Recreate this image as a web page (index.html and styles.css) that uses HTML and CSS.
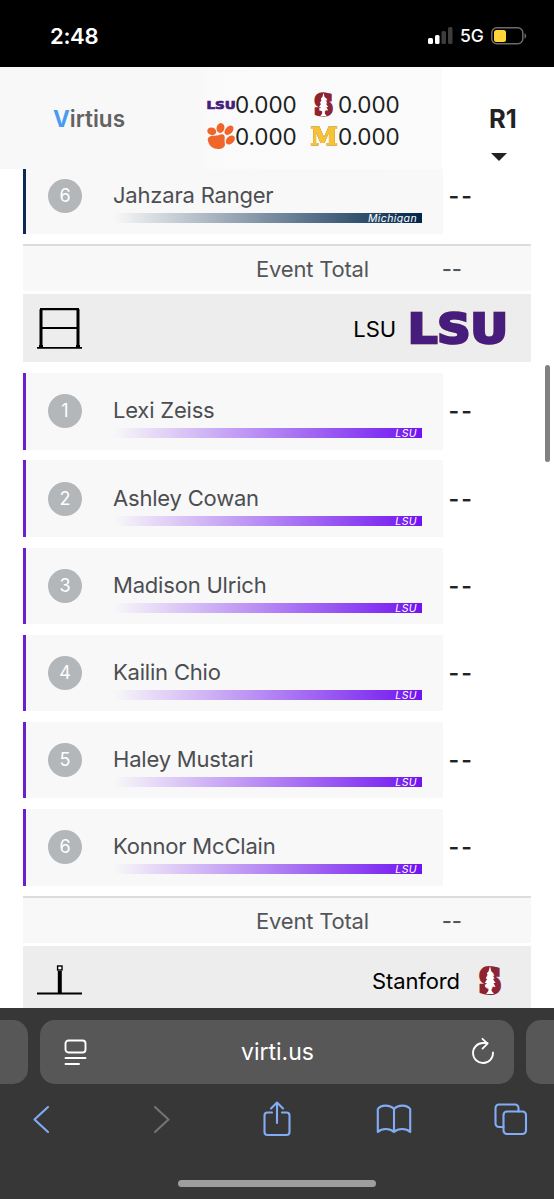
FILE: index.html
```html
<!DOCTYPE html>
<html lang="en">
  <head>
    <meta charset="UTF-8" />
    <meta name="viewport" content="width=device-width, initial-scale=1" />
    <title>Virtius</title>
    <link rel="stylesheet" href="styles.css">
  </head>
  <body>
    <div class="status-bar">
      <span class="time">2:48</span>
      <div class="status-icons">
        <svg width="25" height="17" viewBox="0 0 25 17">
          <rect x="0" y="11" width="5" height="6" rx="1.500" fill="#fff" />
          <rect x="7" y="8" width="4.500" height="9" rx="1.500" fill="#fff" />
          <rect x="13.500" y="4" width="4.500" height="13" rx="1.500" fill="#3d3d3d" />
          <rect x="20" y="0" width="4.500" height="17" rx="1.500" fill="#3d3d3d" />
        </svg>
        <span class="network">5G</span>
        <svg width="36" height="18" viewBox="0 0 36 18">
          <rect x=".8" y=".8" width="31" height="16" rx="5" fill="none" stroke="#6b6b6b" stroke-width="1.500" />
          <rect x="3" y="3" width="12" height="12" rx="2.500" fill="#ffd63a" />
          <path d="M33.500 6.200c2.200.8 2.200 4.600 0 5.400z" fill="#6b6b6b" />
        </svg>
      </div>
    </div>

    <header class="site-header">
      <div class="brand"><b>V</b>irtius</div>
      <div class="scores">
        <div class="team">
          <span class="logo"><svg width="28" height="9" viewBox="0 0 96 32" preserveAspectRatio="none">
            <text class="lsu" x="-2" y="30.500" textLength="100" lengthAdjust="spacingAndGlyphs">LSU</text>
          </svg></span>0.000
        </div>
        <div class="team">
          <span class="logo"><svg width="19" height="27" viewBox="0 0 22 32">
            <text class="block-s" x="0" y="28.500" textLength="22" lengthAdjust="spacingAndGlyphs">S</text>
            <path class="tree" d="M11 2l1.200 5 2 3-1 .5 2.300 4-1.500.5 2.500 4-2 0 2 4-4.200-.5.4 4.500 2.300 3H7l2.300-3 .4-4.500-4 .5 2-4-2 0 2.500-4-1.500-.5 2-4-1-.5 2-3z" />
          </svg></span>0.000
        </div>
        <div class="team">
          <span class="logo"><svg width="28" height="27" viewBox="0 0 28 27" fill="#f0652b">
            <path d="M1.500 14.500C5 11.500 8 13.500 12 12c3-1 4.500-1 5.500 1 .8 2.500-.5 4 .3 7 1 4-2.500 6-6.800 6-5 0-8.500-3-9.500-6.500-.6-2-1.500-3.500 0-5z" />
            <ellipse cx="4.800" cy="8.300" rx="4.600" ry="3.700" transform="rotate(20 4.800 8.300)" />
            <ellipse cx="13.500" cy="5" rx="3.900" ry="5" transform="rotate(14 13.500 5)" />
            <ellipse cx="22" cy="7.300" rx="3.600" ry="5.400" transform="rotate(42 22 7.300)" />
            <ellipse cx="23.300" cy="17" rx="3.600" ry="5.300" transform="rotate(48 23.300 17)" />
          </svg></span>0.000
        </div>
        <div class="team">
          <span class="logo"><svg width="28" height="21" viewBox="0 0 28 21">
            <text class="block-m outline" x=".5" y="19" textLength="27" lengthAdjust="spacingAndGlyphs">M</text>
          </svg></span>0.000
        </div>
      </div>
      <div class="rotation">
        <span>R1</span>
        <svg width="16" height="8" viewBox="0 0 16 8"><path d="M0 0h16L8 8z" fill="#222" /></svg>
      </div>
    </header>

    <main class="page">
      <div class="meet">
        <div class="row michigan">
          <div class="card">
            <span class="order">6</span>
            <div class="gymnast"><span class="name">Jahzara Ranger</span><div class="bar">Michigan</div></div>
          </div>
          <span class="score">--</span>
        </div>
        <div class="total"><span>Event Total</span><span class="total-score">--</span></div>

        <div class="event">
          <svg width="46" height="42" viewBox="0 0 46 42" fill="none" stroke="#000">
            <path d="M4 41V2.200M41 41V2.200" stroke-width="3" />
            <path d="M3 2.200h39M4 21h38" stroke-width="2.200" />
            <path d="M0 40.800h45" stroke-width="1.800" />
            <path d="M2 39.500h4M39 39.500h4" stroke-width="3" />
          </svg>
          <span class="event-team">LSU</span>
          <svg class="event-logo" width="96" height="32" viewBox="0 0 96 32">
            <text class="lsu" x="-2" y="30.500" textLength="100" lengthAdjust="spacingAndGlyphs">LSU</text>
          </svg>
        </div>
        <div class="row">
          <div class="card">
            <span class="order">1</span>
            <div class="gymnast"><span class="name">Lexi Zeiss</span><div class="bar">LSU</div></div>
          </div>
          <span class="score">--</span>
        </div>
        <div class="row">
          <div class="card">
            <span class="order">2</span>
            <div class="gymnast"><span class="name">Ashley Cowan</span><div class="bar">LSU</div></div>
          </div>
          <span class="score">--</span>
        </div>
        <div class="row">
          <div class="card">
            <span class="order">3</span>
            <div class="gymnast"><span class="name">Madison Ulrich</span><div class="bar">LSU</div></div>
          </div>
          <span class="score">--</span>
        </div>
        <div class="row">
          <div class="card">
            <span class="order">4</span>
            <div class="gymnast"><span class="name">Kailin Chio</span><div class="bar">LSU</div></div>
          </div>
          <span class="score">--</span>
        </div>
        <div class="row">
          <div class="card">
            <span class="order">5</span>
            <div class="gymnast"><span class="name">Haley Mustari</span><div class="bar">LSU</div></div>
          </div>
          <span class="score">--</span>
        </div>
        <div class="row">
          <div class="card">
            <span class="order">6</span>
            <div class="gymnast"><span class="name">Konnor McClain</span><div class="bar">LSU</div></div>
          </div>
          <span class="score">--</span>
        </div>
        <div class="total"><span>Event Total</span><span class="total-score">--</span></div>

        <div class="event">
          <svg width="46" height="42" viewBox="0 0 46 42" fill="none" stroke="#000">
            <path d="M0 34.500h45" stroke-width="2" />
            <path d="M22.800 12v22" stroke-width="4" />
            <rect x="20.600" y="7" width="4.400" height="4" fill="#fff" stroke-width="1.400" />
          </svg>
          <span class="event-team">Stanford</span>
          <svg class="event-logo small" width="22" height="32" viewBox="0 0 22 32">
            <text class="block-s" x="0" y="28.500" textLength="22" lengthAdjust="spacingAndGlyphs">S</text>
            <path class="tree" d="M11 2l1.200 5 2 3-1 .5 2.300 4-1.500.5 2.500 4-2 0 2 4-4.200-.5.4 4.500 2.300 3H7l2.300-3 .4-4.500-4 .5 2-4-2 0 2.500-4-1.500-.5 2-4-1-.5 2-3z" />
          </svg>
        </div>
      </div>
      <div class="scroll-thumb"></div>
    </main>

    <footer class="browser">
      <div class="tabs">
        <div class="tab side"></div>
        <div class="tab address">
          <svg width="24" height="27" viewBox="0 0 24 27" fill="none" stroke="#fff" stroke-width="1.900" stroke-linecap="round">
            <rect x="1.500" y="1.500" width="20" height="12" rx="3" />
            <path d="M1.500 19h20M1.500 25h13.500" />
          </svg>
          <span class="url">virti.us</span>
          <svg width="24" height="28" viewBox="0 0 24 28" fill="none" stroke="#fff" stroke-width="1.800" stroke-linecap="round" stroke-linejoin="round">
            <path d="M22 14.500A10 10 0 1 1 12 5h4.500" />
            <path d="M11.500.800l5 4.800-5 5" />
          </svg>
        </div>
        <div class="tab side"></div>
      </div>
      <nav class="toolbar">
        <svg width="34" height="36" viewBox="0 0 34 36"><path d="M24 6L10.500 18.500 24 31" /></svg>
        <svg class="disabled" width="34" height="36" viewBox="0 0 34 36"><path d="M13 6L26.500 18.500 13 31" /></svg>
        <svg width="34" height="36" viewBox="0 0 34 36">
          <path d="M13 11.500H8.500a3 3 0 0 0-3 3V31a3 3 0 0 0 3 3h19a3 3 0 0 0 3-3V14.500a3 3 0 0 0-3-3H23M18 22V2M12 7.500L18 1.500l6 6" />
        </svg>
        <svg width="34" height="36" viewBox="0 0 34 36">
          <path d="M17 8C13 3.500 4 3.500.8 8v23c4-4 12-4 16.200 0 4.200-4 12.200-4 16.200 0V8C30 3.500 21 3.500 17 8zM17 8V31" />
        </svg>
        <svg width="34" height="36" viewBox="0 0 34 36">
          <rect x="9.500" y="10.500" width="22.500" height="22.500" rx="3.500" />
          <path d="M9.500 26H5a3.500 3.500 0 0 1-3.500-3.500V7A3.500 3.500 0 0 1 5 3.500h16A3.500 3.500 0 0 1 24.500 7v3.500" />
        </svg>
      </nav>
      <div class="home-indicator"></div>
    </footer>
  </body>
</html>
```
FILE: styles.css
```css
* {
  margin: 0;
  padding: 0;
  box-sizing: border-box;
}
body {
  background: #fff;
  font-family: Inter, "Liberation Sans", sans-serif;
  height: 1199px;
  display: flex;
  flex-direction: column;
  overflow: hidden;
}
svg {
  display: block;
  flex: none;
  overflow: visible;
}

/* logos */
.lsu {
  font: bold 40px "DejaVu Sans", sans-serif;
  fill: #461d7c;
  stroke: #461d7c;
  stroke-width: 2.6;
}
.event-logo .lsu {
  filter: drop-shadow(0 0 0.5px #d9a860);
}
.block-s {
  font: bold 34px "DejaVu Serif", serif;
  fill: #8c2432;
  stroke: #8c2432;
  stroke-width: 4;
}
.tree {
  fill: #fff;
}
.block-m {
  font: bold 24px "DejaVu Serif", serif;
  fill: #f9c236;
  stroke: #f9c236;
  stroke-width: 1.2;
}
.outline {
  filter: drop-shadow(0 0 0.6px #55553f);
}

.status-bar {
  height: 67px;
  flex: none;
  background: #000;
  color: #fff;
  display: flex;
  justify-content: space-between;
  align-items: center;
  padding: 4px 27px 0 50px;
}
.time {
  font-size: 22px;
  font-weight: 600;
  letter-spacing: -0.3px;
}
.status-icons {
  display: flex;
  align-items: center;
  gap: 7px;
}
.network {
  font-size: 17.5px;
  font-weight: 500;
  width: 24px;
}

.site-header {
  height: 102px;
  flex: none;
  display: flex;
  align-items: center;
  background: linear-gradient(to right, #f8f8f8 200px, #fafafa 210px, #fbfbfb 442px, #fff 442px);
}
.brand {
  width: 206px;
  padding-left: 53px;
  font-size: 22.5px;
  font-weight: 600;
  color: #626262;
}
.brand b {
  font-weight: 700;
  color: #489bf0;
}
.scores {
  display: grid;
  grid-template-columns: 103px 103px;
  grid-template-rows: 32px 32px;
  margin-top: 4px;
}
.team {
  display: flex;
  align-items: center;
  font-size: 22.5px;
  letter-spacing: -0.1px;
  color: #1c1e22;
}
.logo {
  width: 29px;
  flex: none;
  display: flex;
  justify-content: center;
}
.rotation {
  margin-left: 77px;
  display: flex;
  flex-direction: column;
  gap: 18px;
  padding-top: 28px;
  font-size: 25.5px;
  line-height: 32px;
  font-weight: 700;
  color: #222;
}
.rotation svg {
  margin-left: 2px;
}

.page {
  height: 839px;
  flex: none;
  overflow: hidden;
  position: relative;
}
/* scrolled part way, the first row is cut by the header */
.meet {
  margin: -11px 23px 0;
}
.row {
  display: flex;
  align-items: center;
  height: 76.4px;
  margin-bottom: 10.8px;
}
.row.michigan {
  margin-bottom: 9.8px;
}
.card {
  width: 420px;
  height: 100%;
  display: flex;
  align-items: center;
  background: #f8f8f8;
  border-left: 3px solid #6a20cc;
}
.michigan .card {
  border-left-color: #0d2a58;
}
.order {
  width: 34px;
  height: 34px;
  margin-left: 22px;
  border-radius: 50%;
  background: #b3b7ba;
  color: #fff;
  font-size: 18px;
  line-height: 34px;
  text-align: center;
}
.gymnast {
  width: 309px;
  margin-left: 31px;
  padding-top: 12px;
}
.name {
  display: block;
  font-size: 22px;
  line-height: 29px;
  letter-spacing: -0.2px;
  color: #4c4e52;
}
.bar {
  height: 10px;
  margin-top: 3px;
  padding-right: 5px;
  background: linear-gradient(to right, #f8f8f8, #7114f0);
  color: #fff;
  font-size: 10.5px;
  line-height: 11px;
  font-style: italic;
  letter-spacing: 0.4px;
  text-align: right;
}
.michigan .bar {
  background: linear-gradient(to right, #f8f8f8, #00274c);
}
.score {
  margin-left: 5.5px;
  font-size: 23px;
  font-weight: 600;
  letter-spacing: 2px;
  color: #222;
}
.total {
  display: flex;
  align-items: center;
  height: 47px;
  margin-bottom: 3px;
  padding-left: 233px;
  background: #f8f8f8;
  border-top: 2px solid #dcdcdc;
  font-size: 22px;
  letter-spacing: -0.2px;
  color: #535559;
}
.total-score {
  margin-left: 73px;
  font-weight: 500;
}
.event {
  display: flex;
  align-items: center;
  height: 68px;
  margin-bottom: 11px;
  padding: 0 25px 0 14px;
  background: #ededed;
}
.event-team {
  margin-left: auto;
  padding-top: 1px;
  font-size: 22px;
  letter-spacing: -0.1px;
  color: #000;
}
.event-logo {
  margin-left: 14px;
}
.event-logo.small {
  margin-left: 19px;
  margin-right: 5px;
}
.scroll-thumb {
  position: absolute;
  right: 4px;
  top: 196px;
  width: 5px;
  height: 97px;
  border-radius: 3px;
  background: #818181;
}

.browser {
  height: 191px;
  flex: none;
  background: #383738;
  padding-top: 12px;
}
.tabs {
  display: flex;
  gap: 12px;
}
.tab {
  height: 64px;
  border-radius: 15px;
  background: #575757;
}
.side {
  width: 28px;
  border-radius: 0 15px 15px 0;
}
.side:last-child {
  border-radius: 15px 0 0 15px;
}
.address {
  width: 474px;
  display: flex;
  align-items: center;
  justify-content: space-between;
  padding: 0 19px 0 24px;
}
.url {
  color: #fff;
  font-size: 23px;
  margin-right: 4px;
}
.toolbar {
  display: flex;
  justify-content: space-between;
  margin-top: 17px;
  padding: 0 26px 0 24px;
  fill: none;
  stroke: #82adf5;
  stroke-width: 2.1;
  stroke-linecap: round;
  stroke-linejoin: round;
}
.disabled {
  stroke: #747474;
}
.home-indicator {
  width: 198px;
  height: 7px;
  margin: 43px auto 0;
  border-radius: 4px;
  background: #9e9e9e;
}
```
